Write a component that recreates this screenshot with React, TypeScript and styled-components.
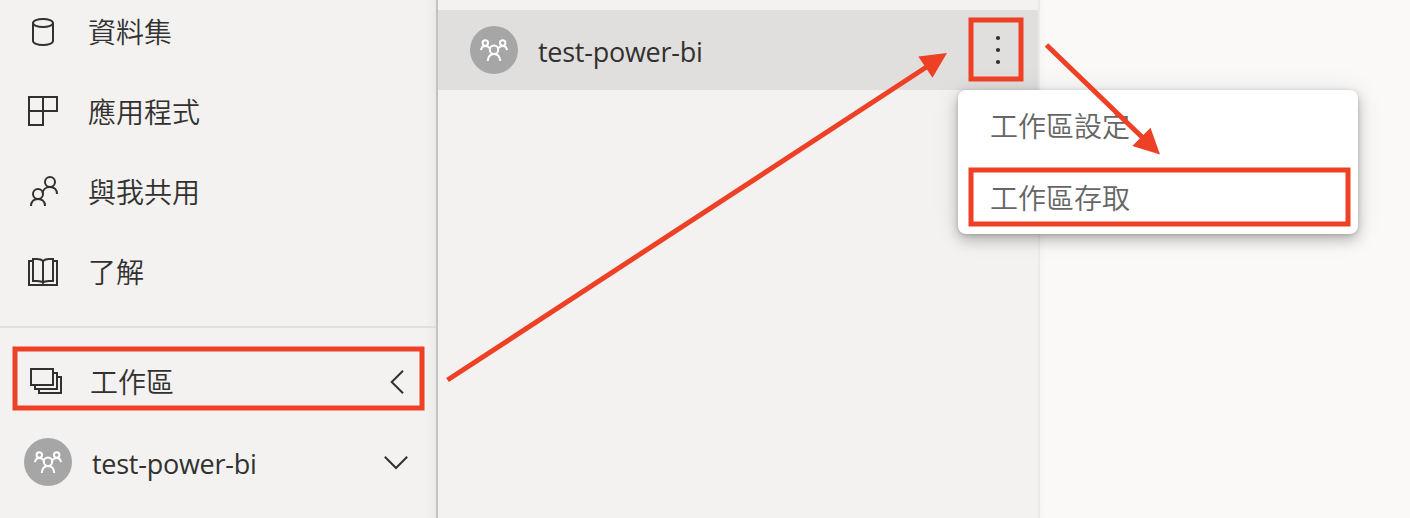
import React from "react";
import styled, { createGlobalStyle } from "styled-components";

const GlobalStyle = createGlobalStyle`
  * { box-sizing: border-box; }
  body {
    margin: 0;
    overflow: hidden;
    color: #323130;
    font-family: "Noto Sans", "Noto Sans CJK TC", sans-serif;
    font-size: 28px;
  }
`;

const Page = styled.div`
  position: relative;
  display: flex;
  width: 1410px;
  height: 518px;
  overflow: hidden;
  background: #faf9f8;
`;

const Sidebar = styled.nav`
  flex: 0 0 438px;
  height: 518px;
  overflow: hidden;
  background: linear-gradient(to right, #f3f2f1 425px, #ecebea 436px);
  border-right: 2px solid #c8c6c4;
`;

const NavList = styled.div`
  margin-top: -8px;
`;

const NavRow = styled.div<{ $pad?: number; $gap?: number }>`
  display: flex;
  align-items: center;
  height: 80px;
  padding: 0 16px 0 ${(p) => p.$pad ?? 19}px;
  gap: ${(p) => p.$gap ?? 21}px;
`;

const Divider = styled.div`
  height: 2px;
  margin: 14px 0;
  background: #e1dfdd;
`;

const Label = styled.span`
  flex: 1;
  padding-bottom: 2px;
  line-height: 40px;
  white-space: nowrap;
  font-family: "Noto Sans CJK TC", sans-serif;
  font-weight: 350;
`;

const Name = styled.span`
  flex: 1;
  padding-top: 4px;
  line-height: 40px;
  white-space: nowrap;
  font-family: "Open Sans", sans-serif;
  font-size: 27px;
  letter-spacing: -0.26px;
`;

const Icon = styled.svg`
  flex: none;
  width: 48px;
  height: 48px;
  fill: none;
  stroke: #323130;
  stroke-width: 2;
`;

const Circle = styled(Icon)`
  border-radius: 50%;
  background: #a6a6a6;
  stroke: #fff;
`;

const Panel = styled.section`
  flex: 0 0 602px;
  height: 518px;
  padding-top: 10px;
  background: #f3f2f1;
  border-right: 2px solid #ebeae9;
  box-shadow: 0 0 8px rgba(0, 0, 0, 0.04);
`;

const Workspace = styled.div`
  position: relative;
  display: flex;
  align-items: center;
  height: 80px;
  padding: 0 16px 0 32px;
  gap: 20px;
  background: #e1dfdd;
`;

const Menu = styled.div`
  position: absolute;
  top: 80px;
  left: 520px;
  width: 400px;
  height: 144px;
  border-radius: 8px;
  background: #fff;
  box-shadow: 0 6px 14px rgba(0, 0, 0, 0.24), 0 1px 30px rgba(0, 0, 0, 0.08), 0 1px 4px rgba(0, 0, 0, 0.16);
`;

const MenuItem = styled.div`
  display: flex;
  align-items: center;
  height: 72px;
  padding: 0 32px;
  color: #666;
`;

const Annotations = styled.svg`
  position: absolute;
  inset: 0;
  pointer-events: none;
  fill: none;
  stroke: #ee4024;
  stroke-width: 5;
`;

const icons: Record<string, React.ReactNode> = {
  data: (
    <>
      <ellipse cx="24" cy="15" rx="10" ry="4" />
      <path d="M14 15v18c0 2.2 4.5 4 10 4s10-1.8 10-4V15" />
    </>
  ),
  apps: <path d="M10 9h28v14H10zM10 9v28h14V9" />,
  shared: (
    <>
      <circle cx="31" cy="14" r="5" />
      <circle cx="19" cy="26" r="5" />
      <path d="M12 38c0-4.500 3-7 7-7s7 2.500 7 7M23.500 25c.5-3.500 3.500-6 7.500-6s7 2.500 7 7" />
    </>
  ),
  learn: (
    <path d="M13 13h-3v24h28V13h-3M24 13c-1.500-1.500-3.500-2-6-2h-4v22h4c3 0 5 .4 6 2 1-1.600 3-2 6-2h4V11h-4c-2.500 0-4.500.5-6 2zM24 13v22" />
  ),
  workspaces: <path d="M12 11h22v16H12zM35 15h3v16H16v-4M39 19h3v16H20v-4" />,
};

const PeopleAvatar = () => (
  <Circle viewBox="0 0 48 48">
    <circle cx="24" cy="23.700" r="4.200" />
    <circle cx="15.300" cy="17" r="2.700" />
    <circle cx="32.700" cy="17" r="2.700" />
    <path d="M17.700 35c.4-4.500 2.800-7 6.300-7s5.900 2.500 6.300 7M11 24.200c.3-2.800 1.800-4.300 4.300-4.300 2 0 3.500.8 4.500 2.300M37 24.200c-.3-2.800-1.800-4.300-4.300-4.300-2 0-3.500.8-4.500 2.300" />
  </Circle>
);

const links = [
  { icon: "data", text: "資料集" },
  { icon: "apps", text: "應用程式" },
  { icon: "shared", text: "與我共用" },
  { icon: "learn", text: "了解" },
];

export default function App() {
  return (
    <>
      <GlobalStyle />
      <Page>
        <Sidebar>
          <NavList>
            {links.map((l) => (
              <NavRow key={l.icon}>
                <Icon viewBox="0 0 48 48">{icons[l.icon]}</Icon>
                <Label>{l.text}</Label>
              </NavRow>
            ))}
          </NavList>
          <Divider />
          <NavRow $gap={23}>
            <Icon viewBox="0 0 48 48">{icons.workspaces}</Icon>
            <Label>工作區</Label>
            <Icon viewBox="0 0 48 48">
              <path d="M31 12.800 19.700 24 31 35.200" />
            </Icon>
          </NavRow>
          <NavRow $pad={24} $gap={20}>
            <PeopleAvatar />
            <Name>test-power-bi</Name>
            <Icon viewBox="0 0 48 48">
              <path d="M12.800 18.700 24 30l11.200-11.300" />
            </Icon>
          </NavRow>
        </Sidebar>
        <Panel>
          <Workspace>
            <PeopleAvatar />
            <Name>test-power-bi</Name>
            <Icon viewBox="0 0 48 48">
              <g fill="#323130" stroke="none">
                <circle cx="24" cy="12" r="2.100" />
                <circle cx="24" cy="24" r="2.100" />
                <circle cx="24" cy="36" r="2.100" />
              </g>
            </Icon>
            <Menu>
              <MenuItem><Label>工作區設定</Label></MenuItem>
              <MenuItem><Label>工作區存取</Label></MenuItem>
            </Menu>
          </Workspace>
        </Panel>
        <Annotations width="1410" height="518" viewBox="0 0 1410 518">
          <rect x="15" y="349" width="407" height="59" />
          <rect x="971" y="20" width="50" height="59" />
          <rect x="971" y="170" width="377" height="54" />
          <path d="M447.500 380 928 66M1046.500 45 1144 139" />
          <path fill="#ee4024" stroke="none" d="M947 53 918.300 56.600 932.500 77.700zM1160 154.500 1150.500 127.800 1132.300 146z" />
        </Annotations>
      </Page>
    </>
  );
}
